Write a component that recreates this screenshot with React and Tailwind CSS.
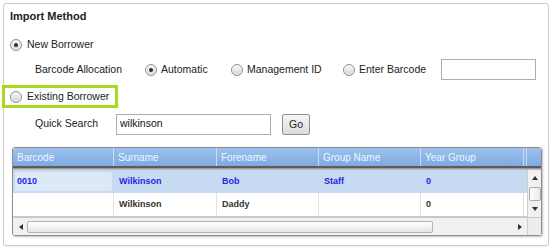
import React from 'react';

const Radio = ({ checked }) => (
  <span className="flex h-[12px] w-[12px] shrink-0 items-center justify-center rounded-full border border-[#8e8e8e] bg-linear-to-b from-[#fbfbfb] to-[#d3d3d3] shadow-[inset_0_0_0_1px_#f4f4f4]">
    {checked && <span className="h-[4px] w-[4px] rounded-full bg-[#2e2e2e]" />}
  </span>
);

const Arrow = ({ dir }) => {
  const points = {
    up: '0,4 3,0 6,4',
    down: '0,0 3,4 6,0',
    left: '4,0 0,3 4,6',
    right: '0,0 4,3 0,6',
  };
  const vertical = dir === 'up' || dir === 'down';
  return (
    <svg width={vertical ? 6 : 4} height={vertical ? 4 : 6} className="block">
      <polygon points={points[dir]} fill="#303030" />
    </svg>
  );
};

const columns = [
  { name: 'Barcode', w: 'w-[101px]' },
  { name: 'Surname', w: 'w-[103px]' },
  { name: 'Forename', w: 'w-[102px]' },
  { name: 'Group Name', w: 'w-[102px]' },
  { name: 'Year Group', w: 'w-[103px]' },
];

const rows = [
  ['0010', 'Wilkinson', 'Bob', 'Staff', '0'],
  ['', 'Wilkinson', 'Daddy', '', '0'],
];

const App = () => {
  return (
    <div className="h-[249px] w-[554px] bg-white pl-[3px] pt-[3px] font-['Liberation_Sans',Arial,sans-serif] text-[10.5px] text-[#222]">
      <div className="flex h-[243px] w-[546px] flex-col rounded-[3px] border border-[#c9c9c9] bg-white shadow-[0_1px_1px_rgba(0,0,0,0.06)]">
        <div className="ml-[6px] mt-[5px] h-[14px] text-[11px] font-bold leading-[14px] text-[#1e1e1e]">Import Method</div>

        <div className="mt-[14px] flex h-[16px] items-center gap-[5px] pl-[6px]">
          <Radio checked />
          <span>New Borrower</span>
        </div>

        <div className="mt-[6px] flex h-[21px] items-center pl-[31px]">
          <span className="w-[110px]">Barcode Allocation</span>
          <div className="flex w-[86px] items-center gap-[4px]">
            <Radio checked />
            <span>Automatic</span>
          </div>
          <div className="flex w-[112px] items-center gap-[4px]">
            <Radio />
            <span>Management ID</span>
          </div>
          <div className="flex w-[98px] items-center gap-[4px]">
            <Radio />
            <span>Enter Barcode</span>
          </div>
          <div className="h-[21px] w-[95px] border border-[#abadb3] bg-white" />
        </div>

        <div className="ml-[-2px] mt-[5px] flex h-[23px] w-[116px] items-center gap-[5px] border-[3px] border-[#a8d71d] pl-[5px]">
          <Radio />
          <span>Existing Borrower</span>
        </div>

        <div className="mt-[5px] flex h-[22px] items-center pl-[31px]">
          <span className="w-[81px]">Quick Search</span>
          <div className="flex h-[21px] w-[155px] items-center border border-[#abadb3] bg-white pl-[3px] text-[#111]">wilkinson</div>
          <button className="ml-[11px] mt-[1px] flex h-[21px] w-[28px] items-center justify-center rounded-[2px] border border-[#8f8f8f] bg-linear-to-b from-[#f6f6f6] to-[#dcdcdc] text-[10.5px] text-[#222]">Go</button>
        </div>

        <div className="ml-[8px] mt-[12px] flex h-[89px] w-[530px] flex-col overflow-hidden rounded-[3px] border border-[#8d8d8d] shadow-[1px_1px_2px_rgba(0,0,0,0.25)]">
          <div className="flex h-[18px] shrink-0 bg-linear-to-b from-[#9cc1ed] to-[#7eaae2] text-[10px] text-[#f2f6fc]">
            {columns.map((c) => (
              <div key={c.name} className={`${c.w} flex items-center border-r border-[#c9dcf4] pl-[4px]`}>{c.name}</div>
            ))}
            <div className="w-[3px] border-r border-[#c9dcf4]" />
            <div className="flex-1" />
          </div>
          <div className="h-[2px] shrink-0 bg-[#5c5c5c]" />
          <div className="h-[2px] shrink-0 bg-linear-to-b from-[#8e8e8e] to-[#c9c9c9]" />

          <div className="flex h-[47px] shrink-0">
            <div className="flex w-[514px] flex-col border-b border-[#c8c8c8] text-[9px] font-bold">
              {rows.map((r, i) => (
                <div key={i} className={`flex h-[23px] ${i === 0 ? 'bg-[#c6daf2] text-[#2626e6]' : 'bg-white text-[#333]'}`}>
                  {r.map((v, j) => (
                    <div
                      key={j}
                      className={`${columns[j].w} flex items-center ${i === 1 ? 'border-r border-[#e2e2e2]' : ''} ${j === 0 ? 'p-[2px]' : 'pl-[5px]'}`}
                    >
                      {j === 0 ? (
                        <div className={`flex h-full w-full items-center rounded-[2px] pl-[2px] ${i === 0 ? 'bg-[#dde9f7]' : ''}`}>{v}</div>
                      ) : (
                        v
                      )}
                    </div>
                  ))}
                </div>
              ))}
            </div>
            <div className="flex w-[14px] flex-col items-center border-l border-[#cfcfcf] bg-[#f0f0f0]">
              <div className="flex h-[15px] items-center justify-center"><Arrow dir="up" /></div>
              <div className="mt-[2px] h-[14px] w-[12px] rounded-[2px] border border-[#a9a9a9] bg-linear-to-r from-[#ffffff] to-[#e8e8e8]" />
              <div className="flex flex-1 items-center justify-center"><Arrow dir="down" /></div>
            </div>
          </div>

          <div className="flex flex-1 border-t border-[#c8c8c8] bg-[#f1f1f1]">
            <div className="flex w-[514px] items-center">
              <div className="flex w-[14px] items-center justify-center pl-[2px]"><Arrow dir="left" /></div>
              <div className="h-[12px] w-[406px] rounded-[2px] border border-[#b2b2b2] bg-linear-to-b from-[#ffffff] to-[#e6e6e6]" />
              <div className="flex flex-1 items-center justify-end pr-[5px]"><Arrow dir="right" /></div>
            </div>
            <div className="w-[14px] border-l border-[#cfcfcf] bg-[#ececec]" />
          </div>
        </div>
      </div>
    </div>
  );
};

export default App;
